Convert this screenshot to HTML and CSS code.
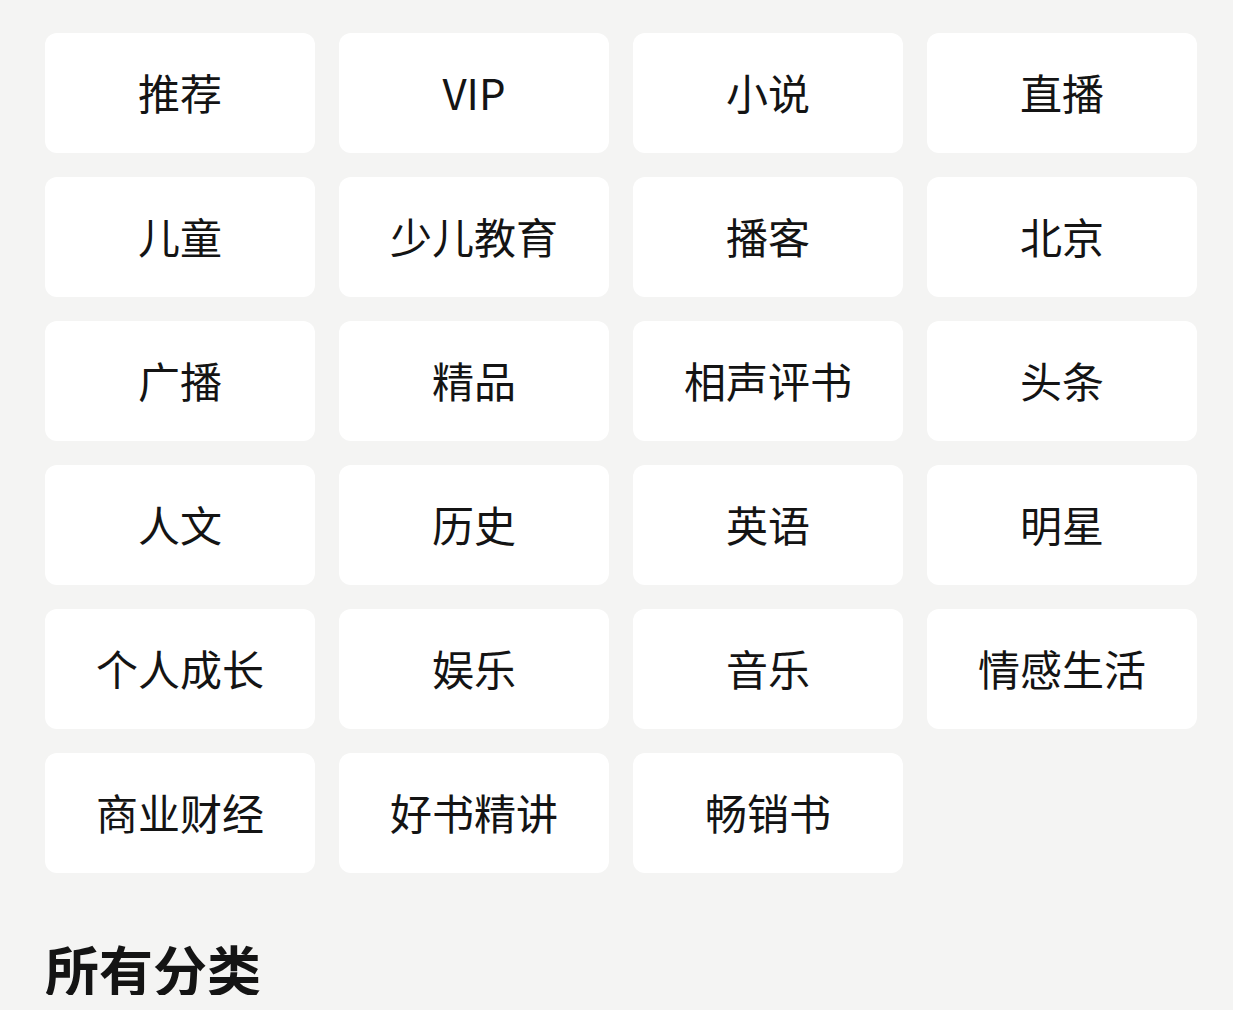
FILE: index.html
```html
<!DOCTYPE html>
<html lang="zh-CN">
<head>
<meta charset="utf-8">
<title>分类</title>
<link rel="stylesheet" href="styles.css">
</head>
<body>
<main class="page">
  <div class="grid">
    <div class="tag">推荐</div>
    <div class="tag">VIP</div>
    <div class="tag">小说</div>
    <div class="tag">直播</div>
    <div class="tag">儿童</div>
    <div class="tag">少儿教育</div>
    <div class="tag">播客</div>
    <div class="tag">北京</div>
    <div class="tag">广播</div>
    <div class="tag">精品</div>
    <div class="tag">相声评书</div>
    <div class="tag">头条</div>
    <div class="tag">人文</div>
    <div class="tag">历史</div>
    <div class="tag">英语</div>
    <div class="tag">明星</div>
    <div class="tag">个人成长</div>
    <div class="tag">娱乐</div>
    <div class="tag">音乐</div>
    <div class="tag">情感生活</div>
    <div class="tag">商业财经</div>
    <div class="tag">好书精讲</div>
    <div class="tag">畅销书</div>
  </div>
  <h2 class="section-title">所有分类</h2>
</main>
</body>
</html>
```
FILE: styles.css
```css
html, body {
  margin: 0;
  padding: 0;
  background: #f4f4f3;
}
body {
  font-family: "Noto Sans CJK SC", "Noto Sans", sans-serif;
  color: #141414;
}
.page {
  padding: 33px 36px 0 45px;
}
.grid {
  display: grid;
  grid-template-columns: repeat(4, 270px);
  grid-auto-rows: 120px;
  gap: 24px;
}
.tag {
  background: #ffffff;
  border-radius: 12px;
  display: flex;
  align-items: center;
  justify-content: center;
  font-size: 42px;
  line-height: 1;
  padding-bottom: 2px;
  box-sizing: border-box;
}
.section-title {
  margin: 70px 0 0 0;
  font-size: 54px;
  line-height: 52px;
  font-weight: 700;
  color: #141414;
}
```
